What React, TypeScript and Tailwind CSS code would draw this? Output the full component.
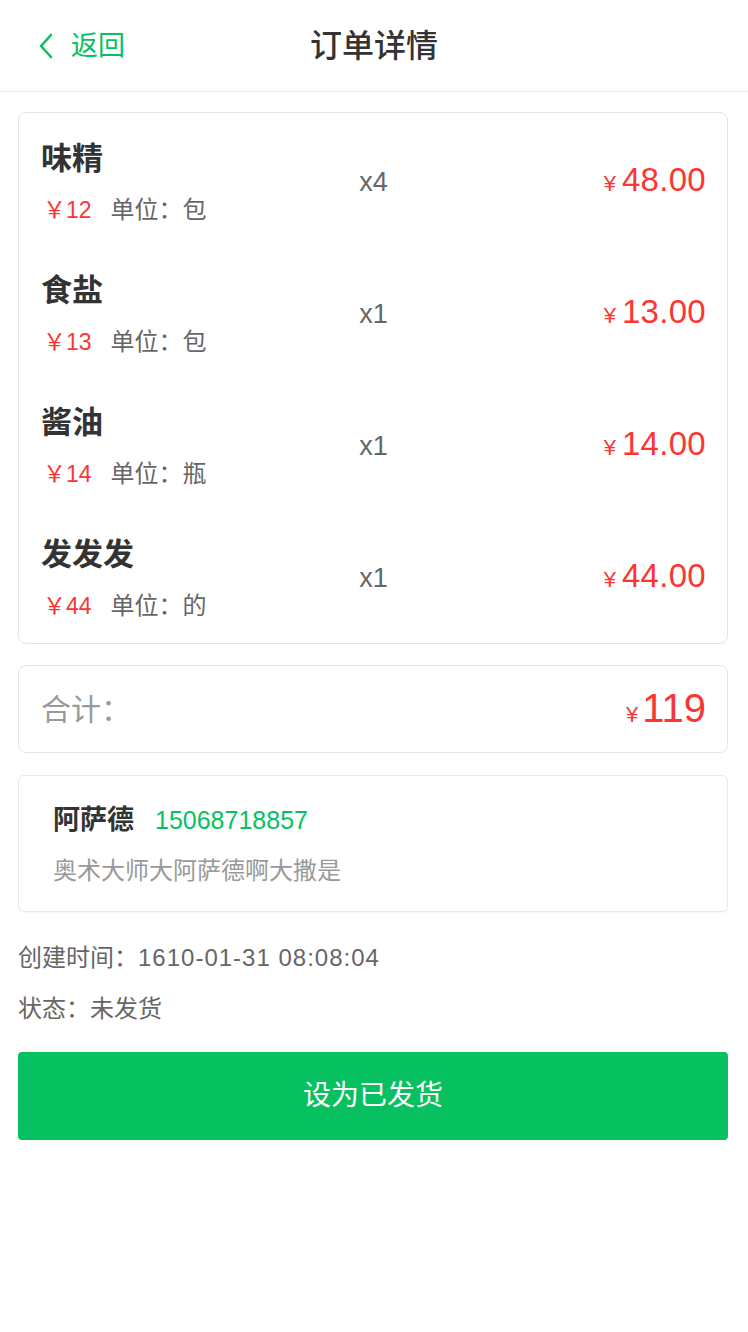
import React from "react";

const items = [
  { name: "味精", price: "12", unit: "包", qty: "x4", total: "48.00" },
  { name: "食盐", price: "13", unit: "包", qty: "x1", total: "13.00" },
  { name: "酱油", price: "14", unit: "瓶", qty: "x1", total: "14.00" },
  { name: "发发发", price: "44", unit: "的", qty: "x1", total: "44.00" },
];

export default function App() {
  return (
    <div className="min-h-[1332px] w-[748px] bg-white font-['Liberation_Sans','Noto_Sans_CJK_SC',sans-serif]">
      {/* Header */}
      <div className="relative flex h-[92px] items-center justify-center border-b border-[#e8e8e8]">
        <div className="absolute left-[38px] top-0 flex h-[92px] items-center gap-[17px] text-[#07c160]">
          <svg width="16" height="26" viewBox="0 0 16 26" fill="none">
            <path d="M13 2 L3 13 L13 24" stroke="#07c160" strokeWidth="2.6" strokeLinecap="round" strokeLinejoin="round" />
          </svg>
          <span className="text-[27px] leading-none">返回</span>
        </div>
        <span className="text-[32px] font-medium leading-none text-[#333]">订单详情</span>
      </div>

      <div className="pl-[18px] pr-[20px]">
        {/* Items card */}
        <div className="mt-[20px] rounded-[8px] border border-[#e3e5e9] pb-[2px] pl-[22px] pr-[21px]">
          {items.map((it) => (
            <div key={it.name} className="flex h-[132px] items-center">
              <div className="flex flex-1 flex-col pt-[6px]">
                <div className="text-[31px] font-bold leading-[40px] text-[#333]">{it.name}</div>
                <div className="mt-[15px] flex items-center text-[23px] leading-[32px]">
                  <span className="ml-[2px] text-[#fa3534]">￥{it.price}</span>
                  <span className="ml-[19px] text-[24px] text-[#666]">单位：{it.unit}</span>
                </div>
              </div>
              <div className="flex flex-1 justify-center pt-[6px] text-[27px] text-[#666]">{it.qty}</div>
              <div className="flex flex-1 items-baseline justify-end pt-[2px] text-[#fa3534]">
                <span className="mr-[6px] text-[22px]">¥</span>
                <span className="text-[33px] tracking-[0.3px]">{it.total}</span>
              </div>
            </div>
          ))}
        </div>

        {/* Total card */}
        <div className="mt-[21px] flex h-[88px] items-center justify-between rounded-[8px] border border-[#e3e5e9] pl-[22px] pr-[21px]">
          <span className="text-[30px] text-[#999]">合计：</span>
          <div className="flex items-baseline text-[#fa3534]">
            <span className="mr-[4px] text-[22px]">¥</span>
            <span className="text-[40px] leading-none">119</span>
          </div>
        </div>

        {/* Address card */}
        <div className="mt-[22px] rounded-[6px] border border-[#e6e8eb] pb-[23px] pl-[34px] pr-[20px] pt-[26px] shadow-[0_1px_2px_rgba(0,0,0,0.04)]">
          <div className="flex items-center leading-[36px]">
            <span className="text-[27px] font-bold text-[#333]">阿萨德</span>
            <span className="ml-[21px] text-[25px] text-[#07c160]">15068718857</span>
          </div>
          <div className="mt-[16px] text-[24px] leading-[34px] text-[#999]">奥术大师大阿萨德啊大撒是</div>
        </div>

        {/* Meta */}
        <div className="mt-[29px] text-[24px] leading-[34px] text-[#666]">
          创建时间：<span className="tracking-[1px]">1610-01-31 08:08:04</span>
        </div>
        <div className="mt-[17px] text-[24px] leading-[34px] text-[#666]">状态：未发货</div>

        {/* Button */}
        <button className="mt-[26px] flex h-[88px] w-full items-center justify-center rounded-[4px] bg-[#07c160] text-[28px] text-white">
          设为已发货
        </button>
      </div>
    </div>
  );
}
